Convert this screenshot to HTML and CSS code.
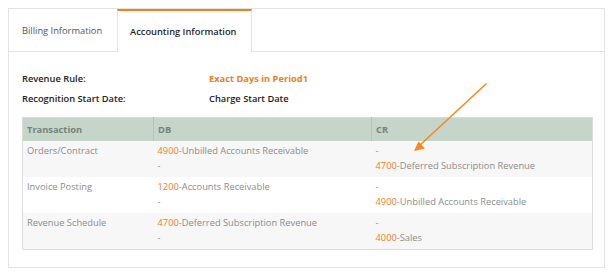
FILE: index.html
```html
<!DOCTYPE html>
<html>
<head>
<meta charset="utf-8">
<link rel="stylesheet" href="styles.css">
</head>
<body>
<div class="panel">
  <div class="tabs">
    <div class="tab">Billing Information</div>
    <div class="tab active">Accounting Information</div>
  </div>
  <div class="content">
    <div class="info">
      <div class="label">Revenue Rule:</div>
      <div class="value orange">Exact Days in Period1</div>
      <div class="label">Recognition Start Date:</div>
      <div class="value">Charge Start Date</div>
    </div>
    <table class="acct">
      <thead>
        <tr><th class="c1">Transaction</th><th class="c2">DB</th><th>CR</th></tr>
      </thead>
      <tbody>
        <tr>
          <td>Orders/Contract</td>
          <td><span class="num">4900</span>-Unbilled Accounts Receivable<br>-</td>
          <td>-<br><span class="num">4700</span>-Deferred Subscription Revenue</td>
        </tr>
        <tr>
          <td>Invoice Posting</td>
          <td><span class="num">1200</span>-Accounts Receivable<br>-</td>
          <td>-<br><span class="num">4900</span>-Unbilled Accounts Receivable</td>
        </tr>
        <tr>
          <td>Revenue Schedule</td>
          <td><span class="num">4700</span>-Deferred Subscription Revenue<br>-</td>
          <td>-<br><span class="num">4000</span>-Sales</td>
        </tr>
      </tbody>
    </table>
  </div>
  <svg class="arrow" width="597" height="259" viewBox="0 0 597 259">
    <line x1="478" y1="76" x2="411" y2="138" stroke="#f7891f" stroke-width="1.6" stroke-linecap="round"/>
    <polygon points="406,143 417,140.5 410.5,133.5" fill="#f7891f"/>
  </svg>
</div>
</body>
</html>
```

FILE: styles.css
```css
html, body {
  margin: 0;
  padding: 0;
  background: #fff;
}
body {
  padding: 8px;
  font-family: "Open Sans", "Noto Sans", sans-serif;
  font-size: 9.3px;
  color: #333;
}
.panel {
  position: relative;
  box-sizing: border-box;
  width: 597px;
  height: 260px;
  border: 1px solid #e3e3e3;
}
.tabs {
  display: flex;
  height: 42px;
  border-bottom: 1px solid #e3e3e3;
}
.tab {
  box-sizing: border-box;
  display: flex;
  align-items: center;
  white-space: nowrap;
  height: 42px;
  padding: 0 0 0 13px;
  color: #555;
}
.tab:first-child {
  width: 108px;
}
.tab.active {
  width: 135px;
  height: 43px;
  margin-bottom: -1px;
  background: #fff;
  border-top: 2px solid #f47d20;
  border-left: 1px solid #e3e3e3;
  border-right: 1px solid #e3e3e3;
  padding-left: 12px;
  padding-bottom: 1px;
  color: #1f1f1f;
  font-weight: 600;
}
.content {
  padding: 17px 12px 0 13px;
}
.info {
  display: grid;
  grid-template-columns: 187px 1fr;
  line-height: 20px;
  color: #222;
  font-weight: 600;
}
.info .orange {
  color: #f47d20;
  font-weight: 700;
}
.acct {
  margin-top: 8px;
  width: 571px;
  border-collapse: collapse;
  border: 1px solid #dcdcdc;
  line-height: 15px;
}
.acct thead tr {
  height: 23px;
}
.acct tbody tr {
  height: 36px;
}
.acct th {
  background: #c5d5ca;
  color: #74847a;
  font-weight: 700;
  text-align: left;
  padding: 0 4px;
  border-right: 1px solid #b5c5ba;
}
.acct th:last-child {
  border-right: none;
}
.acct th.c1 {
  width: 122px;
}
.acct th.c2 {
  width: 209px;
}
.acct td {
  vertical-align: top;
  padding: 2px 4px 4px;
  color: #8c8c8c;
}
.acct tbody tr:nth-child(odd) td {
  background: #f7f7f7;
}
.num {
  color: #f47d20;
}
.arrow {
  position: absolute;
  left: -1px;
  top: -1px;
  pointer-events: none;
}
```
